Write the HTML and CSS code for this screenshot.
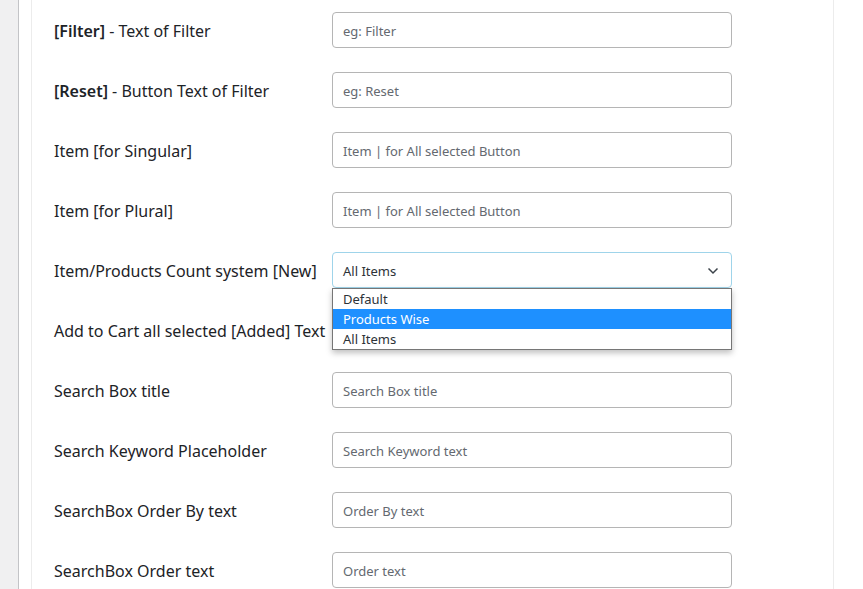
FILE: index.html
```html
<!DOCTYPE html>
<html lang="en">
<head>
<meta charset="utf-8">
<title>Settings</title>
<link rel="stylesheet" href="styles.css">
</head>
<body>
<div class="page">
  <div class="sidebar"></div>
  <div class="main">
    <div class="card">
      <div class="form">
        <div class="label"><span><b>[Filter]</b> - Text of Filter</span></div>
        <div class="field"><input class="input" type="text" placeholder="eg: Filter"></div>

        <div class="label"><span><b>[Reset]</b> - Button Text of Filter</span></div>
        <div class="field"><input class="input" type="text" placeholder="eg: Reset"></div>

        <div class="label"><span>Item [for Singular]</span></div>
        <div class="field"><input class="input" type="text" placeholder="Item | for All selected Button"></div>

        <div class="label"><span>Item [for Plural]</span></div>
        <div class="field"><input class="input" type="text" placeholder="Item | for All selected Button"></div>

        <div class="label"><span>Item/Products Count system [New]</span></div>
        <div class="field">
          <div class="select">
            <span>All Items</span>
            <svg class="chev" width="12" height="8" viewBox="0 0 12 8"><path d="M1.5 1.5 L6 6 L10.5 1.5" fill="none" stroke="#3c434a" stroke-width="1.5"/></svg>
          </div>
          <ul class="dropdown">
            <li>Default</li>
            <li class="sel">Products Wise</li>
            <li>All Items</li>
          </ul>
        </div>

        <div class="label"><span>Add to Cart all selected [Added] Text</span></div>
        <div class="field"><input class="input" type="text" placeholder="Added"></div>

        <div class="label"><span>Search Box title</span></div>
        <div class="field"><input class="input" type="text" placeholder="Search Box title"></div>

        <div class="label"><span>Search Keyword Placeholder</span></div>
        <div class="field"><input class="input" type="text" placeholder="Search Keyword text"></div>

        <div class="label"><span>SearchBox Order By text</span></div>
        <div class="field"><input class="input" type="text" placeholder="Order By text"></div>

        <div class="label"><span>SearchBox Order text</span></div>
        <div class="field"><input class="input" type="text" placeholder="Order text"></div>
      </div>
    </div>
  </div>
</div>
</body>
</html>
```
FILE: styles.css
```css
html, body {
  margin: 0;
  padding: 0;
  background: #ffffff;
  height: 100%;
  overflow: hidden;
}
body {
  font-family: "Noto Sans", "Open Sans", sans-serif;
  color: #1d2327;
}
.page {
  display: flex;
  height: 589px;
}
.sidebar {
  width: 18px;
  background: #f0f0f1;
  border-right: 1px solid #c3c4c7;
  flex: none;
}
.main {
  flex: none;
  width: 815px;
  padding-left: 12px;
  box-sizing: border-box;
  background: #fff;
}
.card {
  border-left: 1px solid #ececec;
  border-right: 1px solid #ececec;
  height: 589px;
  padding-left: 22px;
  box-sizing: border-box;
}
.form {
  display: grid;
  grid-template-columns: 278px 400px;
  grid-auto-rows: 36px;
  row-gap: 24px;
  padding-top: 12px;
}
.label {
  display: flex;
  align-items: center;
  font-size: 16px;
  white-space: nowrap;
  padding-top: 1px;
}
.label b {
  font-weight: 600;
}
.field {
  position: relative;
}
.input {
  box-sizing: border-box;
  width: 400px;
  height: 36px;
  border: 1px solid #b5b5b5;
  border-radius: 4px;
  padding: 2px 10px 0;
  font-family: "Noto Sans", "Open Sans", sans-serif;
  font-size: 13px;
  color: #2c3338;
  background: #fff;
  outline: none;
}
.input::placeholder {
  color: #646970;
}
.select {
  box-sizing: border-box;
  width: 400px;
  height: 36px;
  border: 1px solid #9fd4ea;
  border-radius: 4px;
  padding: 2px 10px 0;
  display: flex;
  align-items: center;
  justify-content: space-between;
  font-size: 13px;
  color: #2c3338;
  background: #fff;
}
.chev {
  margin-right: 2px;
}
.dropdown {
  position: absolute;
  left: 0;
  top: 36px;
  width: 400px;
  box-sizing: border-box;
  margin: 0;
  padding: 0;
  list-style: none;
  background: #fff;
  border: 1px solid #767676;
  box-shadow: 0 3px 6px rgba(0, 0, 0, 0.25);
  z-index: 5;
}
.dropdown li {
  height: 20px;
  line-height: 20px;
  padding: 0 10px;
  font-size: 13px;
  color: #2c3338;
}
.dropdown li.sel {
  background: #1e90ff;
  color: #fff;
}
```
